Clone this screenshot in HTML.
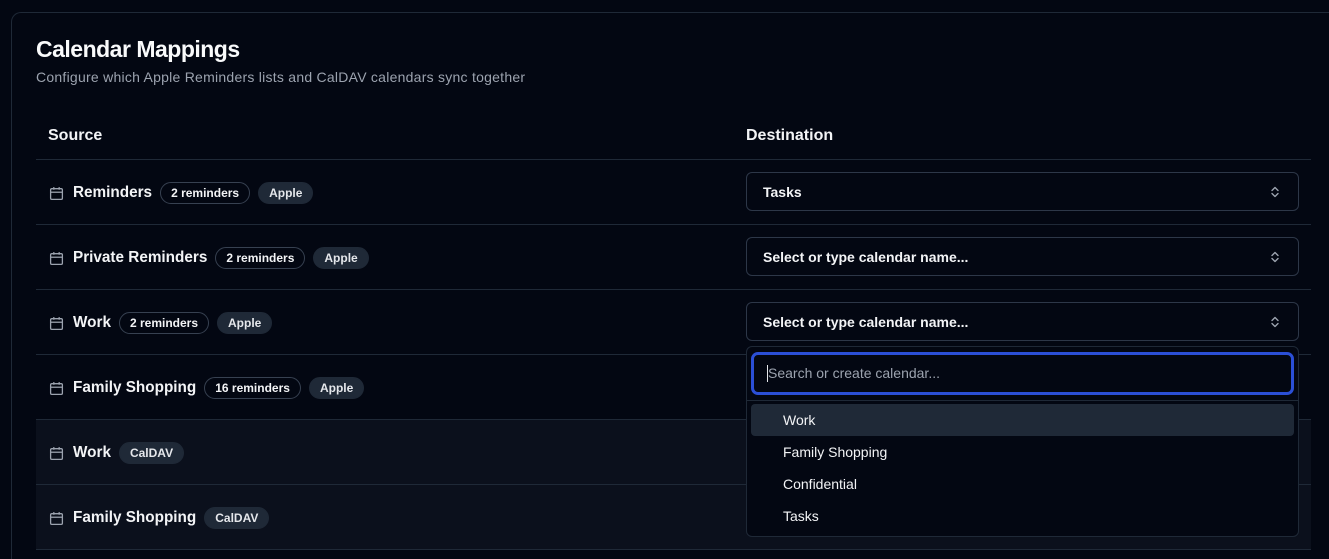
<!DOCTYPE html>
<html style="width:1329px;height:559px;overflow:hidden"><head><style>
*{box-sizing:border-box;margin:0;padding:0}
body{width:1329px;height:559px;overflow:hidden;background:#030712;font-family:"Liberation Sans",sans-serif;color:#f3f4f6;position:relative}
.card{position:absolute;left:11px;top:12px;width:1318px;height:547px;border:1px solid #1f2937;border-right:none;border-bottom:none;border-radius:10px 0 0 0}
h1{position:absolute;left:36px;top:36px;font-size:23px;font-weight:bold;letter-spacing:-0.5px;color:#f9fafb}
.sub{position:absolute;left:36px;top:69px;font-size:14px;color:#9ca3af;letter-spacing:0.25px}
.th{position:absolute;top:127px;font-size:16px;font-weight:bold;color:#f3f4f6}
.line{position:absolute;left:36px;width:1275px;height:1px;background:#1f2937}
.row{position:absolute;left:36px;width:1275px;height:65px;border-bottom:1px solid #1f2937}
.row.alt{background:#0b101c}
.src{position:absolute;left:13px;top:1px;height:64px;display:flex;align-items:center;gap:8px}
.src .name{font-size:15.3px;font-weight:bold;margin-left:1px}
.ic{width:15px;height:15px}
.b{font-size:12px;font-weight:bold;height:22px;line-height:20px;padding:0 10px;border-radius:11px}
.o{border:1px solid #374151;color:#f3f4f6}
.f{background:#1f2937;border:1px solid #1f2937;color:#e5e7eb}
.sel{position:absolute;left:710px;top:12px;width:553px;height:39px;border:1px solid #2d3748;border-radius:6px;font-size:14px;font-weight:bold;padding-left:16px;line-height:38px;background:#030712}
.sel svg{position:absolute;right:18px;top:12px}
.dd{position:absolute;left:746px;top:346px;width:553px;height:191px;border:1px solid #1f2937;border-radius:6px;background:#030712}
.inp{position:absolute;left:4px;top:5px;width:543px;height:43px;border:3px solid #2b4fd6;border-radius:7px;font-size:14px;color:#9ca3af;padding-left:14px;line-height:37px}
.inp:before{content:"";position:absolute;left:13px;top:10px;width:1px;height:17px;background:#e5e7eb}
.sep{position:absolute;left:0;top:53px;width:551px;height:1px;background:#1f2937}
.it{position:absolute;left:4px;width:543px;height:32px;line-height:32px;padding-left:32px;font-size:14px;color:#f3f4f6;border-radius:4px}
.it.h{background:#1f2937}
</style></head><body>
<div class="card"></div>
<h1>Calendar Mappings</h1>
<div class="sub">Configure which Apple Reminders lists and CalDAV calendars sync together</div>
<div class="th" style="left:48px">Source</div>
<div class="th" style="left:746px">Destination</div>
<div class="line" style="top:159px"></div>

<svg width="0" height="0" style="position:absolute"><defs><symbol id="cal" viewBox="0 0 14 14"><rect x="1.5" y="2.5" width="11" height="10" rx="1.2" fill="none" stroke="#9ca3af" stroke-width="1.2"/><line x1="1.5" y1="5.8" x2="12.5" y2="5.8" stroke="#9ca3af" stroke-width="1.2"/><line x1="4.5" y1="1" x2="4.5" y2="3.5" stroke="#9ca3af" stroke-width="1.2"/><line x1="9.5" y1="1" x2="9.5" y2="3.5" stroke="#9ca3af" stroke-width="1.2"/></symbol>
<symbol id="chev" viewBox="0 0 10 14"><path d="M2 5.5L5 2.5L8 5.5M2 8.5L5 11.5L8 8.5" fill="none" stroke="#9ca3af" stroke-width="1.4" stroke-linecap="round" stroke-linejoin="round"/></symbol></defs></svg>

<div class="row" style="top:160px"><div class="src"><svg class="ic"><use href="#cal"/></svg><span class="name">Reminders</span><span class="b o">2 reminders</span><span class="b f">Apple</span></div>
<div class="sel">Tasks<svg width="10" height="14"><use href="#chev"/></svg></div></div>
<div class="row" style="top:225px"><div class="src"><svg class="ic"><use href="#cal"/></svg><span class="name">Private Reminders</span><span class="b o">2 reminders</span><span class="b f">Apple</span></div>
<div class="sel">Select or type calendar name...<svg width="10" height="14"><use href="#chev"/></svg></div></div>
<div class="row" style="top:290px"><div class="src"><svg class="ic"><use href="#cal"/></svg><span class="name">Work</span><span class="b o">2 reminders</span><span class="b f">Apple</span></div>
<div class="sel">Select or type calendar name...<svg width="10" height="14"><use href="#chev"/></svg></div></div>
<div class="row" style="top:355px"><div class="src"><svg class="ic"><use href="#cal"/></svg><span class="name">Family Shopping</span><span class="b o">16 reminders</span><span class="b f">Apple</span></div></div>
<div class="row alt" style="top:420px"><div class="src"><svg class="ic"><use href="#cal"/></svg><span class="name">Work</span><span class="b f">CalDAV</span></div></div>
<div class="row alt" style="top:485px"><div class="src"><svg class="ic"><use href="#cal"/></svg><span class="name">Family Shopping</span><span class="b f">CalDAV</span></div></div>

<div class="dd">
<div class="inp">Search or create calendar...</div>
<div class="sep"></div>
<div class="it h" style="top:57px">Work</div>
<div class="it" style="top:89px">Family Shopping</div>
<div class="it" style="top:121px">Confidential</div>
<div class="it" style="top:153px">Tasks</div>
</div>
</body></html>
